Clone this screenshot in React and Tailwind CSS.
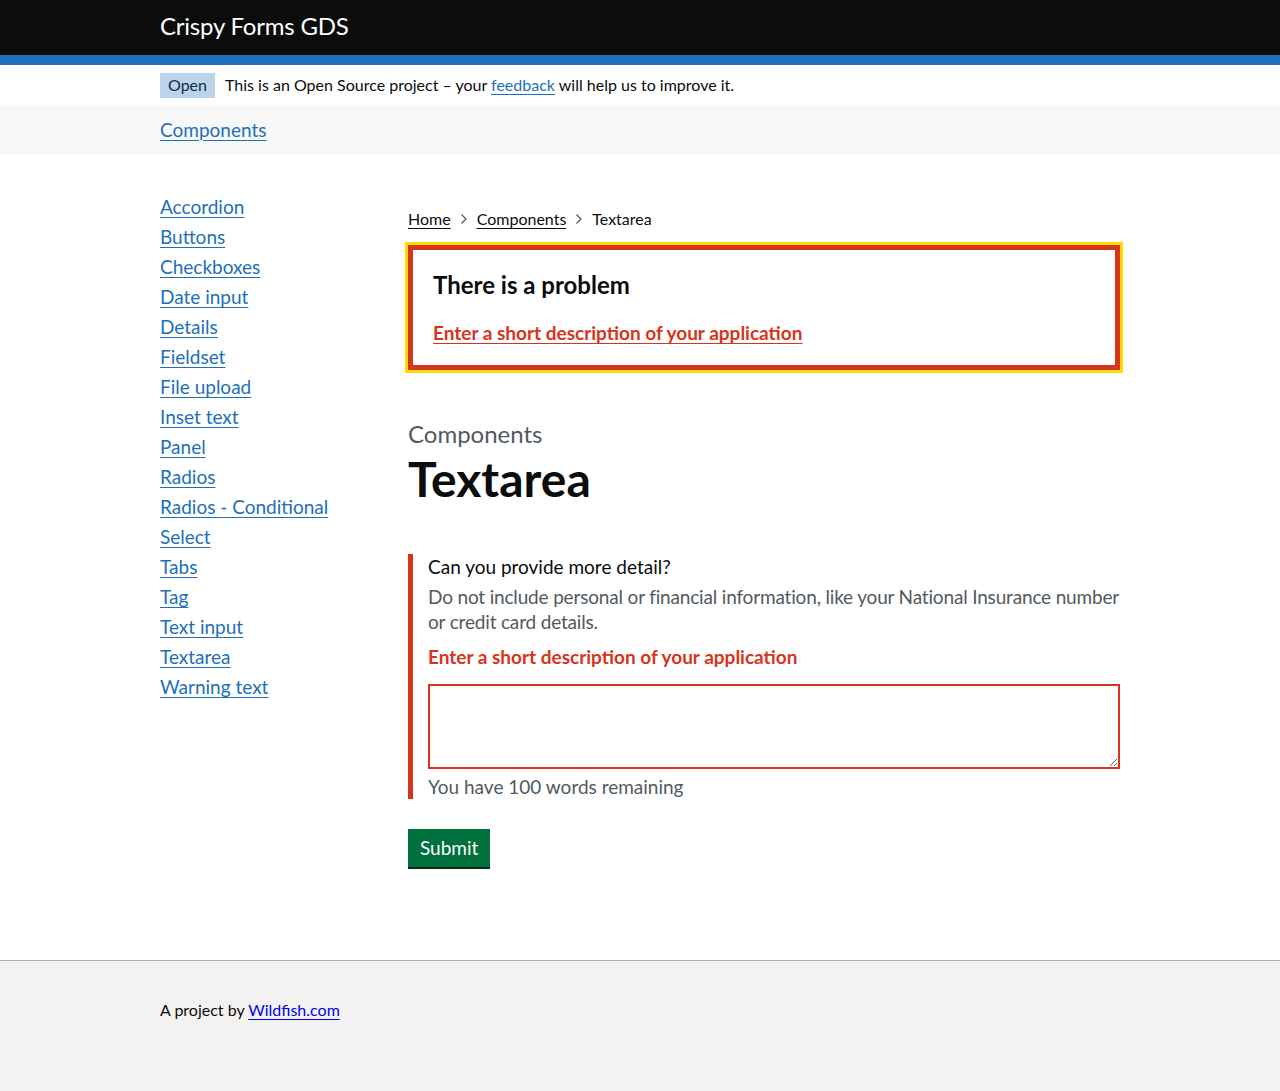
import React from "react";

const FONT = { fontFamily: 'Lato, "Liberation Sans", Arial, sans-serif' };

const sideLinks = [
  "Accordion",
  "Buttons",
  "Checkboxes",
  "Date input",
  "Details",
  "Fieldset",
  "File upload",
  "Inset text",
  "Panel",
  "Radios",
  "Radios - Conditional",
  "Select",
  "Tabs",
  "Tag",
  "Text input",
  "Textarea",
  "Warning text",
];

function Chevron() {
  return (
    <svg width="8" height="12" viewBox="0 0 8 12" className="mx-[9px]" aria-hidden="true">
      <path d="M1.5 1.5 L6 6 L1.5 10.5" fill="none" stroke="#505a5f" strokeWidth="1.2" />
    </svg>
  );
}

export default function App() {
  const link = "underline underline-offset-[0.16em] decoration-1";
  return (
    <div className="min-h-[1091px] flex flex-col bg-white text-[#0b0c0c]" style={FONT}>
      {/* Header */}
      <header className="bg-[#0b0c0c]">
        <div className="w-[960px] mx-auto h-[55px] flex items-center">
          <span className="text-white text-[24px] leading-[30px] pb-[4px] tracking-[-0.2px]">Crispy Forms GDS</span>
        </div>
        <div className="h-[10px] bg-[#1d70b8]" />
      </header>

      {/* Phase banner */}
      <div className="h-[40px] bg-white">
        <div className="w-[960px] mx-auto h-full flex items-center">
          <strong className="font-normal bg-[#bbd4ea] text-[#0c2d4a] text-[16px] leading-[16px] px-[8px] pt-[4px] pb-[5px] mr-[10px]">
            Open
          </strong>
          <span className="text-[16px] leading-[20px] pb-[1px]">
            This is an Open Source project – your{" "}
            <a href="#" className={`text-[#1d70b8] ${link}`}>
              feedback
            </a>{" "}
            will help us to improve it.
          </span>
        </div>
      </div>

      {/* Nav */}
      <div className="h-[50px] bg-[#f8f8f8]">
        <div className="w-[960px] mx-auto h-full flex items-center">
          <a href="#" className={`text-[19px] leading-[25px] pb-[2px] text-[#1d70b8] ${link}`}>
            Components
          </a>
        </div>
      </div>

      {/* Main */}
      <div className="w-[960px] mx-auto flex pt-[39px] pb-[93px]">
        <nav className="w-[248px] shrink-0">
          <ul className="flex flex-col">
            {sideLinks.map((l) => (
              <li key={l} className="mb-[5px] text-[19px] leading-[25px]">
                <a href="#" className={`text-[#1d70b8] ${link}`}>
                  {l}
                </a>
              </li>
            ))}
          </ul>
        </nav>

        <main className="flex-1 min-w-0">
          {/* Breadcrumbs */}
          <ol className="flex items-center mt-[15px] mb-[16px] text-[16px] leading-[20px]">
            <li className="flex items-center">
              <a href="#" className={`text-[#0b0c0c] ${link}`}>Home</a>
              <Chevron />
            </li>
            <li className="flex items-center">
              <a href="#" className={`text-[#0b0c0c] ${link}`}>Components</a>
              <Chevron />
            </li>
            <li>Textarea</li>
          </ol>

          {/* Error summary */}
          <div className="border-[5px] border-[#d4351c] outline-[3px] outline-solid outline-[#ffdd00] p-[20px] mb-[49px]">
            <h2 className="text-[24px] leading-[30px] font-bold mb-[20px]">There is a problem</h2>
            <ul>
              <li className="text-[19px] leading-[25px] font-bold">
                <a href="#" className={`text-[#d4351c] ${link}`}>
                  Enter a short description of your application
                </a>
              </li>
            </ul>
          </div>

          {/* Heading */}
          <span className="block text-[24px] leading-[30px] text-[#505a5f] mb-[5px]">Components</span>
          <h1 className="text-[48px] leading-[50px] font-bold mb-[50px]">Textarea</h1>

          {/* Form group */}
          <div className="border-l-[5px] border-[#d4351c] pl-[15px] mb-[30px]">
            <label className="block text-[19px] leading-[25px] mb-[5px]">Can you provide more detail?</label>
            <div className="text-[19px] leading-[25px] text-[#505a5f] mb-[10px] tracking-[-0.17px]">
              Do not include personal or financial information, like your National Insurance number or credit card
              details.
            </div>
            <p className="text-[19px] leading-[25px] font-bold text-[#d4351c] mb-[15px]">
              Enter a short description of your application
            </p>
            <textarea
              className="block w-full h-[85px] border-2 border-[#d4351c] p-[5px] text-[19px] leading-[25px] mb-[5px] resize-y outline-none"
              style={FONT}
            />
            <div className="text-[19px] leading-[25px] text-[#505a5f]">You have 100 words remaining</div>
          </div>

          <button
            className="bg-[#00703c] text-white text-[19px] leading-[19px] px-[12px] pt-[9px] pb-[10px] shadow-[0_2px_0_#002d18] cursor-pointer"
            style={FONT}
          >
            Submit
          </button>
        </main>
      </div>

      {/* Footer */}
      <footer className="flex-1 bg-[#f3f2f1] border-t border-[#b1b4b6]">
        <div className="w-[960px] mx-auto pt-[39px] pb-[70px] text-[16px] leading-[20px]">
          A project by{" "}
          <a href="#" className={`text-[#0000ee] ${link}`}>
            Wildfish.com
          </a>
        </div>
      </footer>
    </div>
  );
}
